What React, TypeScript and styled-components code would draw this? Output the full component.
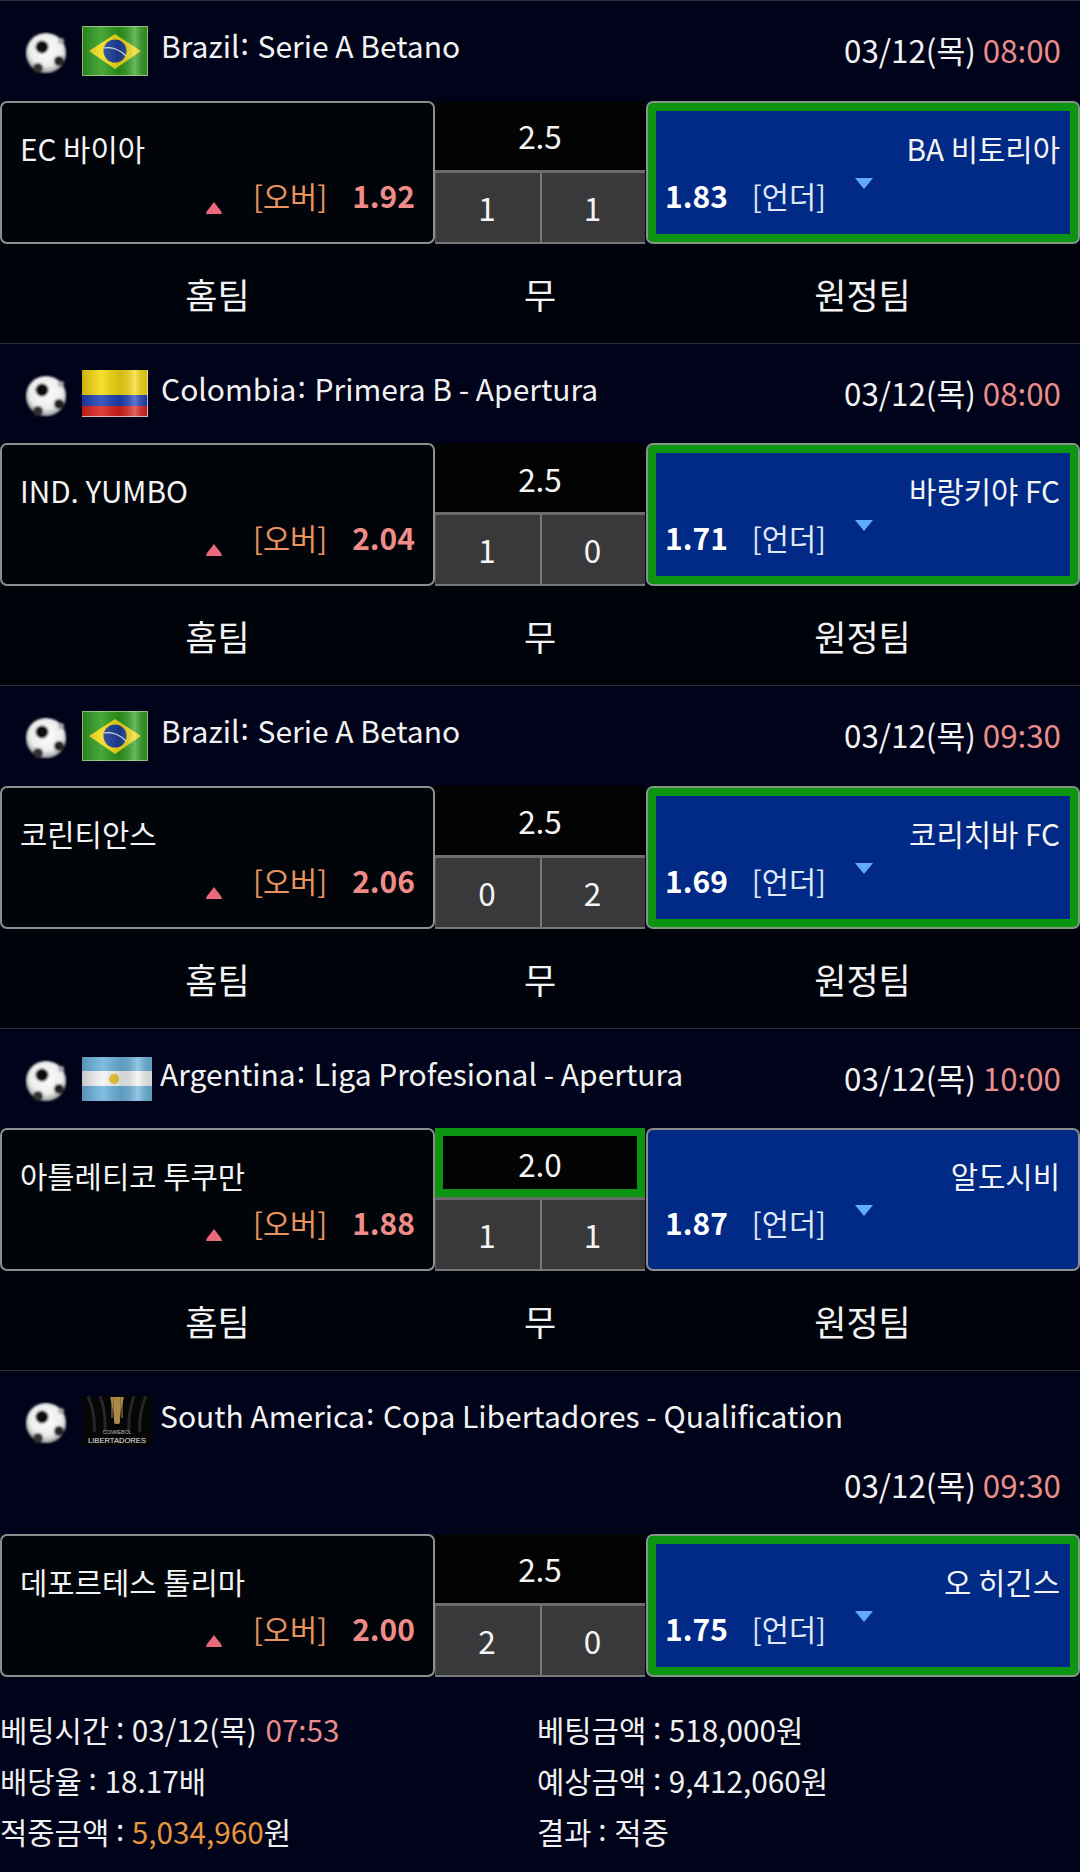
import React from "react";
import styled, { createGlobalStyle } from "styled-components";

const Global = createGlobalStyle`
  html, body { margin: 0; padding: 0; background: #000319; }
  * { box-sizing: border-box; }
  body { font-family: "Noto Sans CJK KR", "Noto Sans", sans-serif; color: #f4f4f4; width: 1080px; }
`;

const Page = styled.div`
  width: 1080px;
  height: 1872px;
  overflow: hidden;
  background: #000319;
`;

const Block = styled.section<{ $last?: boolean }>`
  border-top: 1.5px solid #2b2d35;
  height: ${(p) => (p.$last ? "306.5px" : "342.5px")};
  display: flex;
  flex-direction: column;
`;

const Header = styled.header<{ $last?: boolean }>`
  height: ${(p) => (p.$last ? "162.5px" : "99.5px")};
  flex: none;
  display: flex;
  flex-wrap: wrap;
  align-content: flex-start;
  justify-content: space-between;
`;

const League = styled.div<{ $full?: boolean }>`
  display: flex;
  align-items: flex-start;
  ${(p) => (p.$full ? "flex-basis: 100%;" : "")}
`;

const BallWrap = styled.div`
  width: 42px;
  height: 42px;
  margin: 31px 0 0 25px;
  flex: none;
`;

const FlagWrap = styled.div<{ $w: number }>`
  width: ${(p) => p.$w}px;
  height: 50px;
  margin: 25px 0 0 15px;
  flex: none;
  display: flex;
  align-items: center;
`;

const LeagueName = styled.div<{ $near?: boolean }>`
  font-size: 30px;
  line-height: 40px;
  margin: 21px 0 0 ${(p) => (p.$near ? "8px" : "13px")};
  white-space: nowrap;
  color: #f2f2f2;
`;

const Colon = styled.span<{ $tight?: boolean }>`
  display: inline-block;
  vertical-align: 3px;
  padding: ${(p) => (p.$tight ? "0 1px 0 0" : "0 2px 0 1px")};
`;

const DateText = styled.div<{ $full?: boolean }>`
  font-size: 31.3px;
  line-height: 40px;
  margin: ${(p) => (p.$full ? "19px 19px 0 auto" : "29px 19px 0 0")};
  white-space: nowrap;
  color: #f2f2f2;
`;

const Time = styled.span<{ $wide?: boolean }>`
  color: #e98d8a;
  margin-left: ${(p) => (p.$wide ? "2px" : "0")};
`;

const MatchRow = styled.div`
  display: grid;
  grid-template-columns: 435px 210px 435px;
  height: 143px;
  flex: none;
`;

const Side = styled.div<{ $pick?: boolean; $away?: boolean }>`
  margin-left: ${(p) => (p.$away ? "1px" : "0")};
  border-radius: 7px;
  border: 2px solid ${(p) => (p.$pick ? "#7f9a7f" : "#8e8e8e")};
  background: ${(p) => (p.$away ? "#002a86" : "#010409")};
  ${(p) => (p.$pick ? "box-shadow: inset 0 0 0 8px #0d9410;" : "")}
  display: flex;
  flex-direction: column;
  padding: 26px 18px 0 ${(p) => (p.$away ? "17px" : "18px")};
`;

const TeamName = styled.div<{ $away?: boolean }>`
  font-size: 29.7px;
  line-height: 40px;
  white-space: nowrap;
  color: #f4f4f4;
  text-align: ${(p) => (p.$away ? "right" : "left")};
`;

const OddsLine = styled.div<{ $away?: boolean }>`
  display: flex;
  align-items: flex-start;
  justify-content: ${(p) => (p.$away ? "flex-start" : "flex-end")};
  height: 40px;
  margin-top: 6px;
`;

const Word = styled.span<{ $away?: boolean }>`
  font-size: 29.5px;
  line-height: 40px;
  color: ${(p) => (p.$away ? "#dfe6f6" : "#e8935f")};
`;

const Odd = styled.span<{ $away?: boolean }>`
  font-size: 30px;
  line-height: 40px;
  font-weight: 700;
  color: ${(p) => (p.$away ? "#ffffff" : "#f08c88")};
  ${(p) => (p.$away ? "margin-right: 24px;" : "margin-left: 25px;")}
`;

const UpMark = styled.svg`
  width: 16px;
  height: 12px;
  margin: 27px 31px 0 0;
  flex: none;
`;

const DownMark = styled.svg`
  width: 18px;
  height: 11px;
  margin: 3px 0 0 29px;
  flex: none;
`;

const Center = styled.div`
  display: grid;
  grid-template-columns: 1fr 1fr;
  grid-template-rows: 72px 71px;
`;

const Line = styled.div<{ $pick?: boolean }>`
  grid-column: 1 / 3;
  background: #030303;
  border-bottom: 3px solid #6b6b6b;
  font-size: 31.5px;
  line-height: 1;
  color: #f4f4f4;
  display: flex;
  align-items: center;
  justify-content: center;
  padding-top: 2px;
  ${(p) => (p.$pick ? "box-shadow: inset 0 0 0 8px #0d9410;" : "")}
`;

const Score = styled.div<{ $second?: boolean }>`
  background: #39393b;
  border-bottom: 2px solid #777;
  border-left: ${(p) => (p.$second ? "2px solid #777" : "1px solid #555")};
  font-size: 31.5px;
  color: #f4f4f4;
  display: flex;
  align-items: center;
  justify-content: center;
  padding: 0 2px 1px 0;
`;

const Labels = styled.div`
  flex: 1;
  background: #000209;
  display: grid;
  grid-template-columns: 435px 210px 435px;
  align-items: center;
  text-align: center;
  font-size: 35px;
  color: #f2f2f2;
`;

const Summary = styled.div`
  display: grid;
  grid-template-columns: 537px 1fr;
  grid-auto-rows: 51px;
  font-size: 29.7px;
  line-height: 51px;
  padding-top: 24px;
  white-space: nowrap;
  color: #f0f0f0;
`;

const Amount = styled.span`
  color: #e8963f;
`;

const Ball = () => (
  <svg viewBox="0 0 42 42" width="42" height="42">
    <defs>
      <filter id="soft"><feGaussianBlur stdDeviation="0.9" /></filter>
      <radialGradient id="ballShade" cx="50%" cy="42%" r="58%">
        <stop offset="0%" stopColor="#ffffff" />
        <stop offset="70%" stopColor="#ececec" />
        <stop offset="100%" stopColor="#9a9a9a" />
      </radialGradient>
    </defs>
    <g filter="url(#soft)">
      <circle cx="21" cy="21" r="20" fill="url(#ballShade)" />
      <circle cx="17" cy="15" r="6.5" fill="#111" />
      <circle cx="34" cy="29" r="5" fill="#222" />
      <circle cx="13" cy="36" r="5" fill="#333" />
      <circle cx="36" cy="9" r="3" fill="#aaa" />
    </g>
  </svg>
);

const Wave = ({ id }: { id: string }) => (
  <linearGradient id={id} x1="0" x2="1" y1="0" y2="0">
    <stop offset="0" stopColor="#000" stopOpacity="0.18" />
    <stop offset="0.3" stopColor="#fff" stopOpacity="0.14" />
    <stop offset="0.55" stopColor="#000" stopOpacity="0.12" />
    <stop offset="0.8" stopColor="#fff" stopOpacity="0.3" />
    <stop offset="1" stopColor="#000" stopOpacity="0.12" />
  </linearGradient>
);

const Brazil = () => (
  <svg viewBox="0 0 66 50" width="66" height="50">
    <defs><Wave id="wb" /></defs>
    <rect width="66" height="50" fill="#2d9a1c" />
    <path d="M7 25 33 8 59 25 33 43Z" fill="#f2dc14" />
    <circle cx="33" cy="25" r="11.5" fill="#1d3f96" />
    <path d="M22 22Q34 20 44 30" stroke="#dfe8f0" strokeWidth="1.2" fill="none" />
    <rect width="66" height="50" fill="url(#wb)" />
    <path d="M.5.5H65.5V49.5H.5Z" fill="none" stroke="#cfe0c0" strokeOpacity=".6" />
  </svg>
);

const Colombia = () => (
  <svg viewBox="0 0 66 47" width="66" height="47">
    <defs><Wave id="wc" /></defs>
    <rect width="66" height="25" fill="#f6d80e" />
    <rect y="25" width="66" height="11" fill="#1d3fb5" />
    <rect y="36" width="66" height="11" fill="#d8201c" />
    <rect width="66" height="47" fill="url(#wc)" />
    <path d="M65.5 0V47M0 46.5H66" stroke="#e8e8e8" strokeOpacity=".7" />
  </svg>
);

const Argentina = () => (
  <svg viewBox="0 0 70 44" width="70" height="44">
    <defs><Wave id="wa" /></defs>
    <rect width="70" height="15" fill="#6bb2dc" />
    <rect y="14" width="70" height="16" fill="#f2f3f4" />
    <rect y="29" width="70" height="15" fill="#6bb2dc" />
    <circle cx="32" cy="22" r="5" fill="#e8c52c" />
    <rect width="70" height="44" fill="url(#wa)" />
  </svg>
);

const Libertadores = () => (
  <svg viewBox="0 0 70 50" width="70" height="50">
    <rect width="70" height="50" fill="#060606" />
    <path d="M6 0Q14 20 12 36M18 0Q24 16 23 36M64 0Q56 20 58 36M52 0Q46 16 47 36" stroke="#26262a" strokeWidth="3" fill="none" />
    <path d="M28 1H42L39 14 37.5 28H32.5L31 14Z" fill="#8d6d34" />
    <path d="M30 1V22M33 1V27M35 1V28M37 1V27M40 1V22" stroke="#d9b56c" strokeWidth=".8" />
    <text x="35" y="38" textAnchor="middle" fontSize="5" fill="#bbb" fontFamily="Liberation Sans">CONMEBOL</text>
    <text x="35" y="47" textAnchor="middle" fontSize="8" fill="#e8e8e8" fontFamily="Liberation Sans" textLength="58" lengthAdjust="spacingAndGlyphs">LIBERTADORES</text>
  </svg>
);

const Up = () => (
  <UpMark viewBox="0 0 16 12"><path d="M8 0 11 4 15 9 16 12H0L1 9 5 4Z" fill="#ea6a7c" /></UpMark>
);
const Down = () => (
  <DownMark viewBox="0 0 18 11"><path d="M0 0H18L9 11Z" fill="#62aaff" /></DownMark>
);

type Match = {
  country: string;
  rest: string;
  flag: React.ReactNode;
  flagW: number;
  near?: boolean;
  time: string;
  home: string;
  homeOdd: string;
  line: string;
  linePick?: boolean;
  a: string;
  b: string;
  away: string;
  awayOdd: string;
  awayPick: boolean;
};

const matches: Match[] = [
  { country: "Brazil", rest: " Serie A Betano", flag: <Brazil />, flagW: 66, time: "08:00", home: "EC 바이아", homeOdd: "1.92", line: "2.5", a: "1", b: "1", away: "BA 비토리아", awayOdd: "1.83", awayPick: true },
  { country: "Colombia", rest: " Primera B - Apertura", flag: <Colombia />, flagW: 66, time: "08:00", home: "IND. YUMBO", homeOdd: "2.04", line: "2.5", a: "1", b: "0", away: "바랑키야 FC", awayOdd: "1.71", awayPick: true },
  { country: "Brazil", rest: " Serie A Betano", flag: <Brazil />, flagW: 66, time: "09:30", home: "코린티안스", homeOdd: "2.06", line: "2.5", a: "0", b: "2", away: "코리치바 FC", awayOdd: "1.69", awayPick: true },
  { country: "Argentina", rest: " Liga Profesional - Apertura", flag: <Argentina />, flagW: 70, near: true, time: "10:00", home: "아틀레티코 투쿠만", homeOdd: "1.88", line: "2.0", linePick: true, a: "1", b: "1", away: "알도시비", awayOdd: "1.87", awayPick: false },
  { country: "South America", rest: " Copa Libertadores - Qualification", flag: <Libertadores />, flagW: 70, near: true, time: "09:30", home: "데포르테스 톨리마", homeOdd: "2.00", line: "2.5", a: "2", b: "0", away: "오 히긴스", awayOdd: "1.75", awayPick: true },
];

export default function App() {
  return (
    <Page>
      <Global />
      {matches.map((m, i) => {
        const last = i === matches.length - 1;
        return (
          <Block key={i} $last={last}>
            <Header $last={last}>
              <League $full={last}>
                <BallWrap><Ball /></BallWrap>
                <FlagWrap $w={m.flagW}>{m.flag}</FlagWrap>
                <LeagueName $near={m.near}>{m.country}<Colon>:</Colon>{m.rest}</LeagueName>
              </League>
              <DateText $full={last}>03/12(목) <Time>{m.time}</Time></DateText>
            </Header>
            <MatchRow>
              <Side>
                <TeamName>{m.home}</TeamName>
                <OddsLine>
                  <Up />
                  <Word>[오버]</Word>
                  <Odd>{m.homeOdd}</Odd>
                </OddsLine>
              </Side>
              <Center>
                <Line $pick={m.linePick}>{m.line}</Line>
                <Score>{m.a}</Score>
                <Score $second>{m.b}</Score>
              </Center>
              <Side $away $pick={m.awayPick}>
                <TeamName $away>{m.away}</TeamName>
                <OddsLine $away>
                  <Odd $away>{m.awayOdd}</Odd>
                  <Word $away>[언더]</Word>
                  <Down />
                </OddsLine>
              </Side>
            </MatchRow>
            {!last && (
              <Labels>
                <span>홈팀</span>
                <span>무</span>
                <span>원정팀</span>
              </Labels>
            )}
          </Block>
        );
      })}
      <Summary>
        <div>베팅시간 <Colon $tight>:</Colon> 03/12(목) <Time $wide>07:53</Time></div>
        <div>베팅금액 <Colon $tight>:</Colon> 518,000원</div>
        <div>배당율 <Colon $tight>:</Colon> 18.17배</div>
        <div>예상금액 <Colon $tight>:</Colon> 9,412,060원</div>
        <div>적중금액 <Colon $tight>:</Colon> <Amount>5,034,960</Amount>원</div>
        <div>결과 <Colon $tight>:</Colon> 적중</div>
      </Summary>
    </Page>
  );
}
